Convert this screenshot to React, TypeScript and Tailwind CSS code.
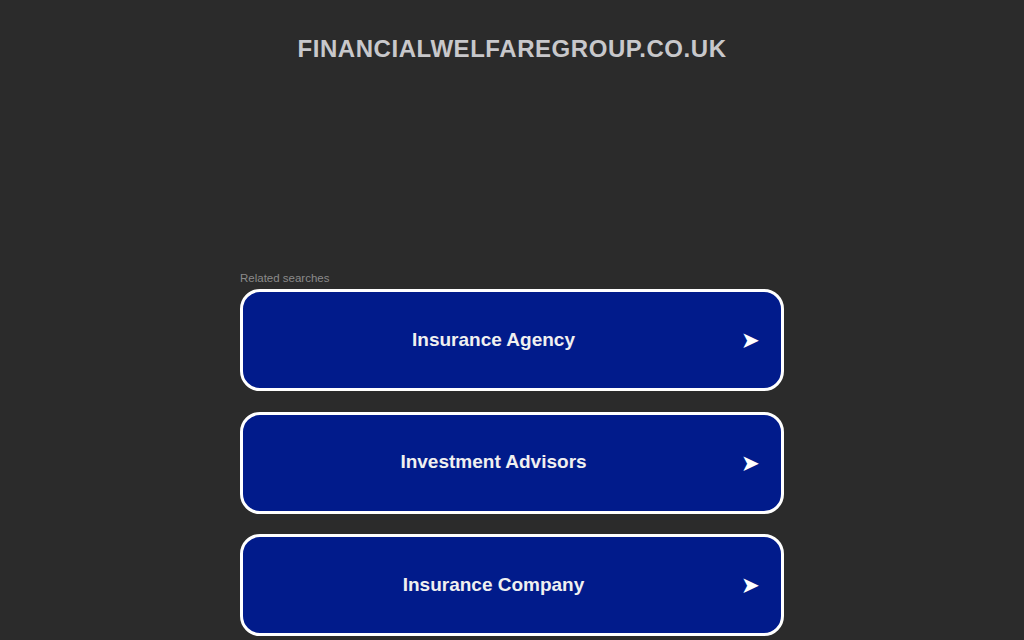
const ITEMS = ["Insurance Agency", "Investment Advisors", "Insurance Company"]

export default function App() {
  return (
    <div className="min-h-screen bg-[#2b2b2b] font-['Liberation_Sans',Arial,sans-serif]">
      <header className="pt-[34px] text-center">
        <h1 className="text-[24px] font-bold leading-[30px] tracking-[0.55px] text-[#c8c8cb]">
          FINANCIALWELFAREGROUP.CO.UK
        </h1>
      </header>
      <main className="mx-auto mt-[207px] w-[544px]">
        <p className="mb-[4px] text-[11.5px] leading-[14px] text-[#8a8a8a]">Related searches</p>
        <div className="flex flex-col gap-[20.5px]">
          {ITEMS.map((label) => (
            <a
              key={label}
              href="#"
              className="relative flex h-[102px] items-center justify-center rounded-[20px] border-[3px] border-white bg-[#011b8b] pr-[37px] text-[19px] font-bold text-[#f0f0f0]"
            >
              {label}
              <span className="absolute right-[22px] top-1/2 -translate-y-1/2 text-[20px] text-white">
                ➤
              </span>
            </a>
          ))}
        </div>
      </main>
    </div>
  )
}
